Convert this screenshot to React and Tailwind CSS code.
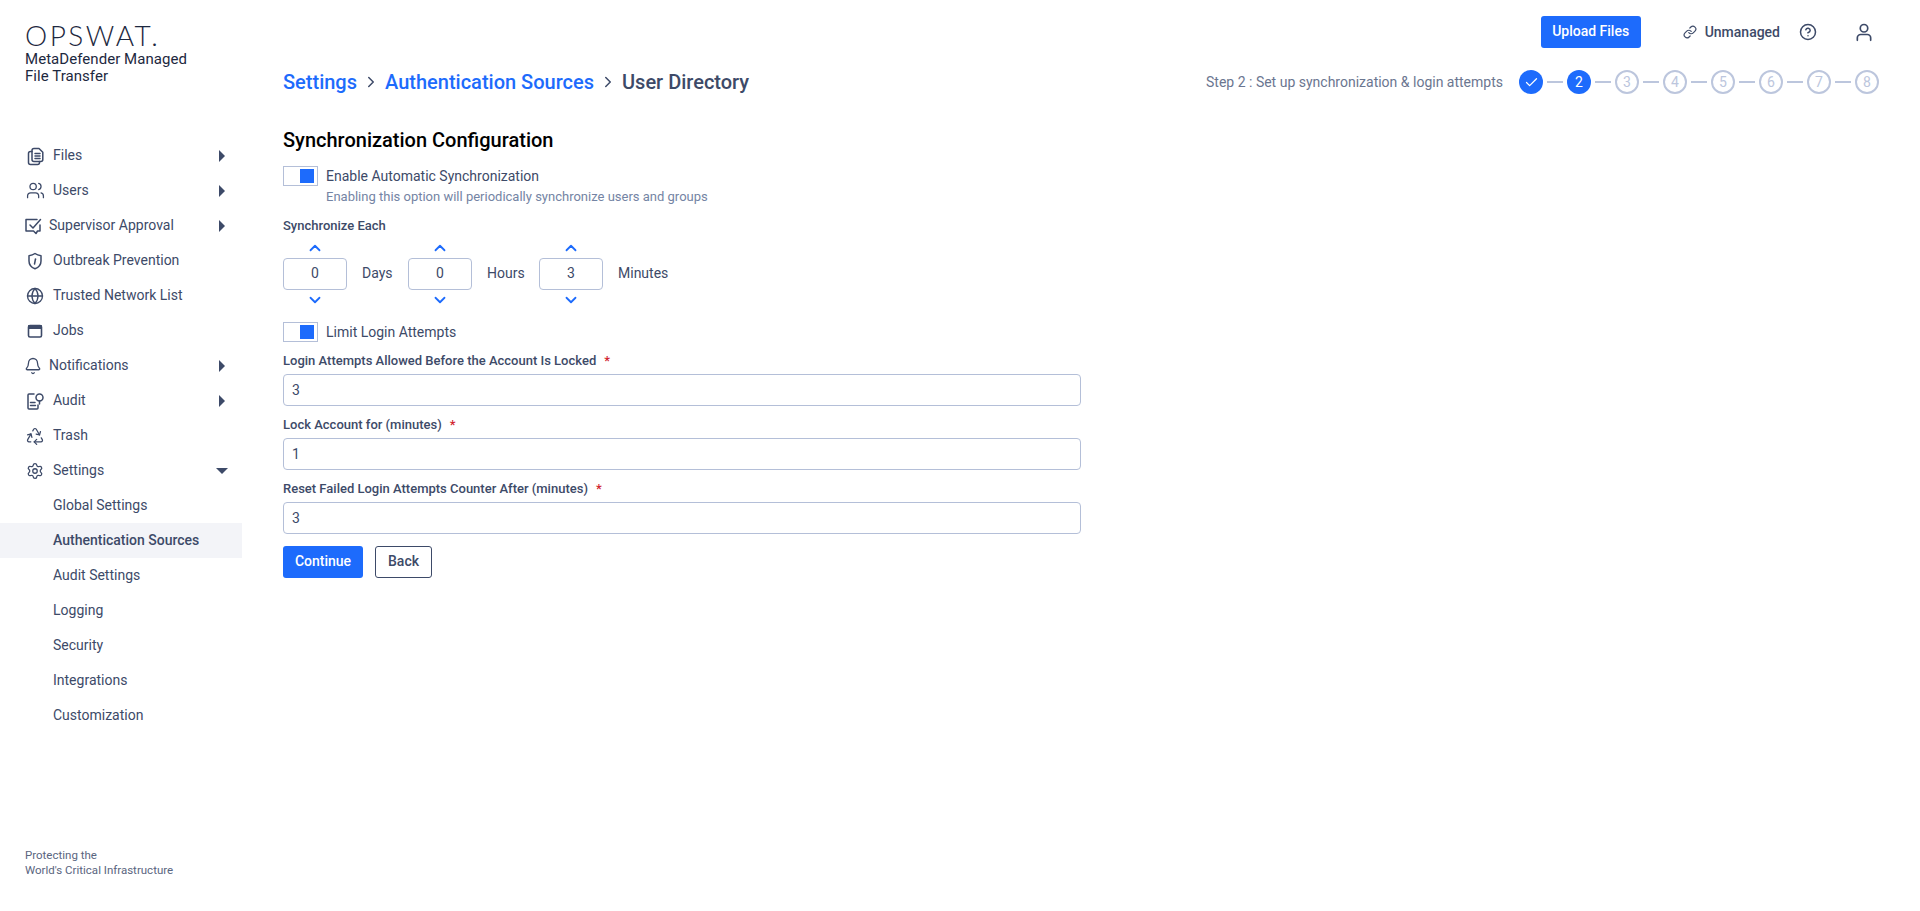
import React from 'react';
import { Users, Globe, Bell, Recycle, Settings, Link, CircleHelp, ChevronUp, ChevronDown, ChevronRight, Check } from 'lucide-react';

const ic = { width: 20, height: 20, viewBox: '0 0 20 20', fill: 'none', stroke: '#3d4a68', strokeWidth: 1.5, strokeLinecap: 'round', strokeLinejoin: 'round' };

const FilesIcon = () => (
  <svg {...ic}><path d="M9 2.500h5l3.800 3.800v7.200a2 2 0 0 1-2 2H9a2 2 0 0 1-2-2V4.500a2 2 0 0 1 2-2z" /><path d="M7 5.500H5.500a2 2 0 0 0-2 2v9a2 2 0 0 0 2 2h7a2 2 0 0 0 2-2v-1" /><path d="M10 7.500h5M10 10h5M10 12.500h5" /></svg>
);
const ApprovalIcon = () => (
  <svg {...ic}><path d="M14 3.500H3v11.500h7.500l2.500 2.500 1.500-2.500H17v-6" /><path d="M7 9l3 3 7.500-8.500" /></svg>
);
const ShieldIcon = () => (
  <svg {...ic}><path d="M10 2.500c2 1.500 4 2 6 2.200v5.300c0 4-2.500 6.500-6 7.800-3.500-1.300-6-3.800-6-7.800V4.700c2-.2 4-.7 6-2.200z" /><path d="M10.500 8l-1 5" /></svg>
);
const JobsIcon = () => (
  <svg {...ic}><rect x="3.500" y="4.500" width="13" height="11.500" rx="1.500" strokeWidth="1.600" /><rect x="3" y="4" width="14" height="4" rx="1" fill="#3d4a68" stroke="none" /></svg>
);
const AuditIcon = () => (
  <svg {...ic}><path d="M9 3H4a1 1 0 0 0-1 1v13a1 1 0 0 0 1 1h8a1 1 0 0 0 1-1v-3" /><circle cx="14.500" cy="6.500" r="3.500" /><path d="M14.500 10v3M5.500 11.500h4.500M5.500 14.500h5" /></svg>
);
const UserIcon = () => (
  <svg width="20" height="20" viewBox="0 0 24 24" fill="none" stroke="#3d4a68" strokeWidth="2" strokeLinecap="round"><circle cx="12" cy="7.500" r="4.500" /><path d="M4 22v-3a4 4 0 0 1 4-4h8a4 4 0 0 1 4 4v3" /></svg>
);

const navItems = [
  { label: 'Files', icon: <FilesIcon />, caret: 'right' },
  { label: 'Users', icon: <Users size={19} color="#3d4a68" strokeWidth={1.6} />, caret: 'right' },
  { label: 'Supervisor Approval', icon: <ApprovalIcon />, caret: 'right', tight: true },
  { label: 'Outbreak Prevention', icon: <ShieldIcon /> },
  { label: 'Trusted Network List', icon: <Globe size={18} color="#3d4a68" strokeWidth={1.8} /> },
  { label: 'Jobs', icon: <JobsIcon /> },
  { label: 'Notifications', icon: <Bell size={18} color="#3d4a68" strokeWidth={1.7} />, caret: 'right', tight: true },
  { label: 'Audit', icon: <AuditIcon />, caret: 'right' },
  { label: 'Trash', icon: <Recycle size={20} color="#3d4a68" strokeWidth={1.5} /> },
  { label: 'Settings', icon: <Settings size={18} color="#3d4a68" strokeWidth={1.7} />, caret: 'down' },
];
const subItems = ['Global Settings', 'Authentication Sources', 'Audit Settings', 'Logging', 'Security', 'Integrations', 'Customization'];

function NavRow({ item }) {
  return (
    <div className="h-[35px] flex items-center pl-[25px] pr-[16px] text-[14px] text-[#3d4a68]">
      <span className={`flex justify-center shrink-0 w-[20px] ${item.tight ? '-ml-[2px] mr-[6px]' : 'mr-[8px]'}`}>{item.icon}</span>
      <span className="flex-1">{item.label}</span>
      {item.caret === 'right' && <span className="w-0 h-0 border-y-[6px] border-y-transparent border-l-[6px] border-l-[#3d4a68] mr-[1px]" />}
      {item.caret === 'down' && <span className="w-0 h-0 border-x-[6px] border-x-transparent border-t-[6px] border-t-[#3d4a68] -mr-[2px]" />}
    </div>
  );
}

function Sidebar() {
  return (
    <aside className="w-[242px] h-[911px] shrink-0 flex flex-col">
      <div className="pl-[25px] pt-[20px] h-[138px]">
        <div className="text-[28px] leading-[30px] font-['Lato'] font-light tracking-[2.5px] text-[#1d2840]">OPSWAT.</div>
        <div className="text-[15px] leading-[17px] mt-[1px] tracking-[0.05px] text-[#1d2840]">MetaDefender Managed<br />File Transfer</div>
      </div>
      <nav>
        {navItems.map((it) => <NavRow key={it.label} item={it} />)}
        {subItems.map((s) => (
          <div key={s} className={`h-[35px] flex items-center pl-[53px] text-[14px] text-[#3d4a68] ${s === 'Authentication Sources' ? 'bg-[#f3f4f8] font-medium' : ''}`}>{s}</div>
        ))}
      </nav>
      <div className="mt-auto pl-[25px] pb-[33px] text-[11.5px] leading-[15px] text-[#5a6580]">Protecting the<br />World's Critical Infrastructure</div>
    </aside>
  );
}

function Step({ n, state }) {
  if (state === 'done') return <span className="w-[24px] h-[24px] rounded-full bg-[#1d6bfc] flex items-center justify-center"><Check size={15} color="#fff" strokeWidth={2} /></span>;
  if (state === 'active') return <span className="w-[24px] h-[24px] rounded-full bg-[#1d6bfc] text-white text-[14px] flex items-center justify-center">{n}</span>;
  return <span className="w-[24px] h-[24px] rounded-full border-2 border-[#bcc6dd] text-[#bcc6dd] text-[14px] flex items-center justify-center">{n}</span>;
}

function Stepper() {
  return (
    <div className="flex items-center">
      {[1, 2, 3, 4, 5, 6, 7, 8].map((n) => (
        <React.Fragment key={n}>
          {n > 1 && <span className="w-[16px] h-[2px] mx-[4px] bg-[#bcc6dd]" />}
          <Step n={n} state={n === 1 ? 'done' : n === 2 ? 'active' : 'todo'} />
        </React.Fragment>
      ))}
    </div>
  );
}

function Toggle({ label }) {
  return (
    <div className="flex items-center h-[20px]">
      <span className="w-[35px] h-[20px] border border-[#b4bfd8] flex items-center justify-end pr-[3px]">
        <span className="w-[14px] h-[14px] bg-[#1d6bfc]" />
      </span>
      <span className="ml-[8px] text-[14px] text-[#3d4a68]">{label}</span>
    </div>
  );
}

function Spin({ value, unit, unitW }) {
  return (
    <div className="flex items-center">
      <div className="flex flex-col items-center w-[64px]">
        <ChevronUp size={18} color="#1d6bfc" strokeWidth={2.4} className="-my-[1px]" />
        <div className="w-[64px] h-[32px] my-[2px] pb-[1px] border border-[#b4bfd8] rounded-[4px] flex items-center justify-center text-[14px] text-[#3d4a68]">{value}</div>
        <ChevronDown size={18} color="#1d6bfc" strokeWidth={2.4} className="-my-[1px]" />
      </div>
      <span className={`ml-[15px] pb-[2px] text-[14px] text-[#3d4a68] ${unitW}`}>{unit}</span>
    </div>
  );
}

function Field({ label, value }) {
  return (
    <div className="mb-[4px]">
      <div className="text-[13px] leading-[30px] h-[28px] font-medium text-[#3d4a68]">{label}<span className="text-[#d1242f] ml-[8px]">*</span></div>
      <div className="w-[798px] h-[32px] border border-[#b4bfd8] rounded-[4px] flex items-center px-[8px] text-[14px] text-[#3d4a68]">{value}</div>
    </div>
  );
}

export default function App() {
  return (
    <div className="flex w-[1920px] h-[911px] bg-white font-['Roboto',sans-serif] overflow-hidden">
      <Sidebar />
      <main className="flex-1 pl-[41px] pr-[41px]">
        <div className="flex items-center justify-end h-[48px] pt-[16px]">
          <button className="w-[100px] h-[32px] pb-[1px] bg-[#1d6bfc] rounded-[3px] text-white text-[14px] font-medium">Upload Files</button>
          <Link size={14} color="#3d4a68" strokeWidth={2} className="ml-[42px]" />
          <span className="ml-[8px] text-[14px] font-medium text-[#3d4a68]">Unmanaged</span>
          <CircleHelp size={18} color="#3d4a68" className="ml-[19px]" />
          <span className="ml-[37px] mr-[5px]"><UserIcon /></span>
        </div>
        <div className="flex items-center justify-between h-[36px] mt-[16px]">
          <div className="flex items-center text-[20px] font-medium">
            <span className="text-[#1d6bfc]">Settings</span>
            <ChevronRight size={18} color="#3d4a68" strokeWidth={2} className="mx-[5px]" />
            <span className="text-[#1d6bfc]">Authentication Sources</span>
            <ChevronRight size={18} color="#3d4a68" strokeWidth={2} className="mx-[5px]" />
            <span className="text-[#3d4a68]">User Directory</span>
          </div>
          <div className="flex items-center">
            <span className="text-[14px] text-[#6b7690] mr-[16px]">Step 2 : Set up synchronization &amp; login attempts</span>
            <Stepper />
          </div>
        </div>
        <h1 className="mt-[26px] text-[20px] leading-[28px] font-medium text-black">Synchronization Configuration</h1>
        <div className="mt-[12px]"><Toggle label="Enable Automatic Synchronization" /></div>
        <div className="ml-[43px] mt-[1px] text-[13px] leading-[20px] text-[#7484a4]">Enabling this option will periodically synchronize users and groups</div>
        <div className="mt-[7px] text-[13px] leading-[24px] font-medium text-[#3d4a68]">Synchronize Each</div>
        <div className="flex items-center mt-[2px]">
          <Spin value="0" unit="Days" unitW="w-[46px]" />
          <Spin value="0" unit="Hours" unitW="w-[52px]" />
          <Spin value="3" unit="Minutes" unitW="w-[60px]" />
        </div>
        <div className="mt-[14px] mb-[4px]"><Toggle label="Limit Login Attempts" /></div>
        <Field label="Login Attempts Allowed Before the Account Is Locked" value="3" />
        <Field label="Lock Account for (minutes)" value="1" />
        <Field label="Reset Failed Login Attempts Counter After (minutes)" value="3" />
        <div className="flex mt-[12px] gap-[12px]">
          <button className="w-[80px] h-[32px] pb-[1px] bg-[#1d6bfc] rounded-[3px] text-white text-[14px] font-medium">Continue</button>
          <button className="w-[57px] h-[32px] pb-[1px] border border-[#3d4a68] rounded-[3px] text-[#3d4a68] text-[14px] font-medium">Back</button>
        </div>
      </main>
    </div>
  );
}
